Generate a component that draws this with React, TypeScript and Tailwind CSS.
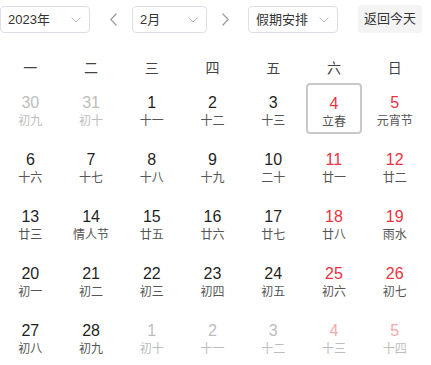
import React from "react";

type Cell = { d: number; l: string; other?: boolean; red?: boolean; sel?: boolean };

const rows: Cell[][] = [
  [
    { d: 30, l: "初九", other: true },
    { d: 31, l: "初十", other: true },
    { d: 1, l: "十一" },
    { d: 2, l: "十二" },
    { d: 3, l: "十三" },
    { d: 4, l: "立春", red: true, sel: true },
    { d: 5, l: "元宵节", red: true },
  ],
  [
    { d: 6, l: "十六" },
    { d: 7, l: "十七" },
    { d: 8, l: "十八" },
    { d: 9, l: "十九" },
    { d: 10, l: "二十" },
    { d: 11, l: "廿一", red: true },
    { d: 12, l: "廿二", red: true },
  ],
  [
    { d: 13, l: "廿三" },
    { d: 14, l: "情人节" },
    { d: 15, l: "廿五" },
    { d: 16, l: "廿六" },
    { d: 17, l: "廿七" },
    { d: 18, l: "廿八", red: true },
    { d: 19, l: "雨水", red: true },
  ],
  [
    { d: 20, l: "初一" },
    { d: 21, l: "初二" },
    { d: 22, l: "初三" },
    { d: 23, l: "初四" },
    { d: 24, l: "初五" },
    { d: 25, l: "初六", red: true },
    { d: 26, l: "初七", red: true },
  ],
  [
    { d: 27, l: "初八" },
    { d: 28, l: "初九" },
    { d: 1, l: "初十", other: true },
    { d: 2, l: "十一", other: true },
    { d: 3, l: "十二", other: true },
    { d: 4, l: "十三", other: true, red: true },
    { d: 5, l: "十四", other: true, red: true },
  ],
];

const week = ["一", "二", "三", "四", "五", "六", "日"];

function Chevron() {
  return (
    <svg width="10" height="6" viewBox="0 0 10 6" fill="none">
      <path d="M0.5 0.5 L5 5 L9.5 0.5" stroke="#b4b7bd" strokeWidth="1" />
    </svg>
  );
}

function Select({ w, text }: { w: string; text: string }) {
  return (
    <div
      className={`${w} h-[27px] mt-[6px] flex items-center justify-between pl-[7px] pr-[8px] border border-[#dcdfe6] rounded-[4px] bg-white text-[13px] text-[#333]`}
    >
      <span className="leading-[20px]">{text}</span>
      <Chevron />
    </div>
  );
}

function Arrow({ left }: { left?: boolean }) {
  return (
    <svg width="7" height="13" viewBox="0 0 7 13" fill="none">
      <path
        d={left ? "M6.5 0.5 L0.8 6.5 L6.5 12.5" : "M0.5 0.5 L6.2 6.5 L0.5 12.5"}
        stroke="#9a9a9a"
        strokeWidth="1.2"
      />
    </svg>
  );
}

export default function App() {
  return (
    <div
      className="w-[425px] bg-white"
      style={{ fontFamily: '"Liberation Sans", "Noto Sans CJK SC", sans-serif' }}
    >
      <div className="h-[40px] flex items-start">
        <Select w="w-[90px]" text="2023年" />
        <div className="ml-[20px] mr-[15px] mt-[13px]">
          <Arrow left />
        </div>
        <Select w="w-[75px]" text="2月" />
        <div className="ml-[15px] mr-[19px] mt-[13px]">
          <Arrow />
        </div>
        <Select w="w-[90px]" text="假期安排" />
        <div className="ml-[20px] mt-[5px] w-[64px] h-[28px] rounded-[4px] bg-[#f4f4f5] flex items-center justify-center text-[13px] text-[#333]">
          返回今天
        </div>
      </div>
      <div className="grid grid-cols-7 pt-[18px] pb-[2px]">
        {week.map((w) => (
          <div key={w} className="text-center text-[14px] leading-[20px] text-[#444]">
            {w}
          </div>
        ))}
      </div>
      {rows.map((r, i) => (
        <div key={i} className="grid grid-cols-7 h-[57px]">
          {r.map((c, j) => {
            const numColor = c.red
              ? c.other
                ? "text-[#f4a9ad]"
                : "text-[#e8333e]"
              : c.other
              ? "text-[#bdbdbd]"
              : "text-[#1f1f1f]";
            const lunarColor = c.other ? "text-[#bdbdbd]" : "text-[#555]";
            return (
              <div
                key={j}
                className={`mx-[2px] my-[3px] h-[51px] rounded-[4px] flex flex-col items-center pt-[9px] border ${
                  c.sel ? "border-[#c9c9c9] border-2 pt-[8px]" : "border-transparent"
                }`}
              >
                <div className={`text-[16px] leading-[20px] ${numColor}`}>{c.d}</div>
                <div className={`text-[12px] leading-[16px] ${lunarColor}`}>{c.l}</div>
              </div>
            );
          })}
        </div>
      ))}
    </div>
  );
}
